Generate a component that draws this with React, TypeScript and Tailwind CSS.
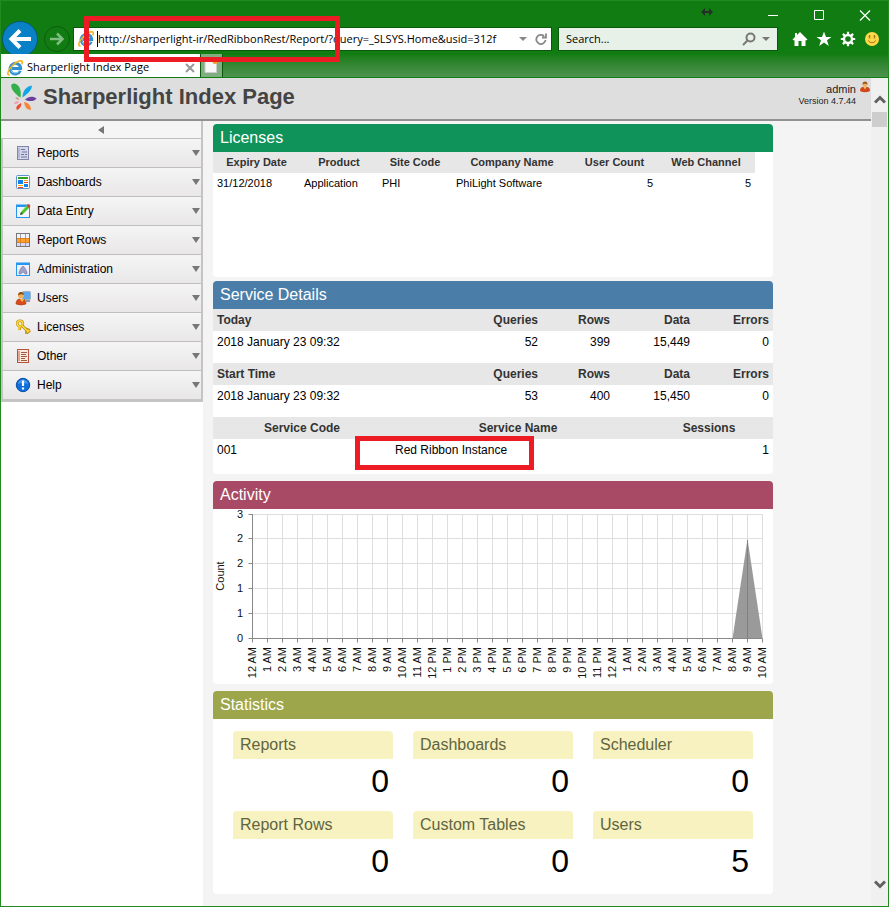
import type { ReactNode } from 'react';

const menuItems = [
    { label: 'Reports', icon: <ReportsIcon /> },
    { label: 'Dashboards', icon: <DashboardsIcon /> },
    { label: 'Data Entry', icon: <DataEntryIcon /> },
    { label: 'Report Rows', icon: <ReportRowsIcon /> },
    { label: 'Administration', icon: <AdministrationIcon /> },
    { label: 'Users', icon: <UsersIcon /> },
    { label: 'Licenses', icon: <KeysIcon /> },
    { label: 'Other', icon: <OtherIcon /> },
    { label: 'Help', icon: <HelpIcon /> },
];

const usage = [
    { title: 'Today', time: '2018 January 23 09:32', queries: '52', rows: '399', data: '15,449', errors: '0' },
    { title: 'Start Time', time: '2018 January 23 09:32', queries: '53', rows: '400', data: '15,450', errors: '0' },
];

const stats = [
    { label: 'Reports', value: 0 },
    { label: 'Dashboards', value: 0 },
    { label: 'Scheduler', value: 0 },
    { label: 'Report Rows', value: 0 },
    { label: 'Custom Tables', value: 0 },
    { label: 'Users', value: 5 },
];

function IeIcon() {
    return (
        <svg className="h-4 w-4 shrink-0" viewBox="0 0 16 16" fill="none">
            <path d="M13.300 10.700A5.300 5.300 0 1 1 13.700 8.600H5" stroke="#2f8fd0" strokeWidth="3" />
            <path d="M12.800 10.400A5.300 5.300 0 0 1 4 11" stroke="#8fd0f5" strokeWidth="1" />
            <path d="M2.600 14.800C-.5 15.600.6 10.600 4.800 6.200C8.800 2 13.800-.3 15 1.300C15.500 2 15.200 3.200 14.600 4.300" stroke="#f2b51c" strokeWidth="1.600" />
        </svg>
    );
}

function ReportsIcon() {
    return (
        <svg className="h-4 w-4" viewBox="0 0 16 16">
            <rect x="2.500" y="1.500" width="11" height="13" fill="#d4d6ea" stroke="#8286a8" />
            <path d="M4 3v10" stroke="#aaaecb" strokeWidth="1.500" />
            <path d="M6 4.500h4M7 7h5M6 9.500h3M10 9.500h2M6 12h6" stroke="#70749c" />
        </svg>
    );
}

function DashboardsIcon() {
    return (
        <svg className="h-4 w-4" viewBox="0 0 16 16">
            <rect x="1.500" y="1.500" width="13" height="13" rx="1" fill="#fff" stroke="#5f90d0" />
            <path d="M3 4h10" stroke="#2fa51e" strokeWidth="2" />
            <path d="M3 6h5v4H3zM9 10h4v3H9z" fill="#1284e8" />
            <path d="M9 6.500h4M3 11.500h5" stroke="#f0a11e" />
            <path d="M9 8.500h4M3 13.500h5" stroke="#df4a24" />
        </svg>
    );
}

function DataEntryIcon() {
    return (
        <svg className="h-4 w-4" viewBox="0 0 16 16">
            <rect x="1.500" y="2" width="13" height="12.500" fill="#f3f4ff" stroke="#2496ee" />
            <path d="M1 3h13" stroke="#2496ee" strokeWidth="2" />
            <path d="M5 12L6 9L12 2.500L14.500 4.500L8 11Z" fill="#48c52d" />
            <path d="M6 9L12 2.500" stroke="#8fea6c" />
            <path d="M11.500 3L13 1L15.500 3L14 5Z" fill="#cf4637" />
            <path d="M5 12l1-3l2 2z" fill="#444" />
        </svg>
    );
}

function ReportRowsIcon() {
    return (
        <svg className="h-4 w-4" viewBox="0 0 16 16">
            <rect x="1.500" y="1.500" width="13" height="13" fill="#f2f2fb" />
            <path d="M2 6h12v5H2z" fill="#ff9f2e" />
            <path d="M2 11h12v3H2z" fill="#d6d6f5" />
            <path d="M5.500 2v4M10.500 2v4M5.500 11v3M10.500 11v3" stroke="#9a9aa8" />
            <path d="M5.500 6v5M10.500 6v5M2 6.500h12M2 10.500h12" stroke="#d07c20" strokeWidth=".8" />
            <rect x="1.500" y="1.500" width="13" height="13" fill="none" stroke="#777" />
        </svg>
    );
}

function AdministrationIcon() {
    return (
        <svg className="h-4 w-4" viewBox="0 0 16 16">
            <rect x="1.500" y="2" width="13" height="12.500" fill="#eef0fc" stroke="#2496ee" />
            <path d="M1 3h14" stroke="#2496ee" strokeWidth="2" />
            <path d="M4 13V11L6 7Q8 3.500 10 7L12 11V13H10L8 11L6 13Z" fill="#9c9fc6" stroke="#7b7ea8" strokeWidth=".6" />
        </svg>
    );
}

function UsersIcon() {
    return (
        <svg className="h-4 w-4" viewBox="0 0 16 16">
            <rect x="7.500" y="1.500" width="8" height="8" rx="1" fill="#5ba9ee" stroke="#9fb2c8" />
            <path d="M11 10h4v2h-4z" fill="#8c98a8" />
            <circle cx="6" cy="5.500" r="3" fill="#f5ae55" />
            <path d="M3 5.500Q3 1.800 6.500 2Q9 2.500 9 5Q6 3.500 3 5.500Z" fill="#8a4a12" />
            <path d="M1 14Q1 9 5 9L8 10.500L9.500 9.500Q11 11 11 14Q6 16 1 14Z" fill="#d94c17" stroke="#a8340e" strokeWidth=".6" />
            <path d="M5 9l2 3l2-2.500z" fill="#f6c34b" />
        </svg>
    );
}

function KeysIcon() {
    return (
        <svg className="h-4 w-4" viewBox="0 0 16 16" fill="none">
            <path d="M5.500 7.500L5 11M10 9l5 2M11 12v3" stroke="#b58a14" strokeWidth="1.500" />
            <circle cx="5" cy="4.500" r="2.800" stroke="#b58a14" strokeWidth="2.600" />
            <circle cx="5" cy="4.500" r="2.800" stroke="#ffd93b" strokeWidth="1.500" />
            <path d="M7 6.500L13.500 13M11.500 14l3.500-3" stroke="#b58a14" strokeWidth="3" />
            <path d="M7 6.500L13.500 13M12 13.500l2.500-2.500" stroke="#ffd93b" strokeWidth="1.600" />
            <path d="M5 8l-1.500 3" stroke="#f2c52d" strokeWidth="2" />
        </svg>
    );
}

function OtherIcon() {
    return (
        <svg className="h-4 w-4" viewBox="0 0 16 16">
            <rect x="2.500" y="1.500" width="11" height="13" fill="#fbe9dc" stroke="#b5533c" />
            <path d="M4 3v10" stroke="#d98e74" strokeWidth="1.500" />
            <path d="M6 4.500h6M6 6.500h5M6 8.500h6M6 10.500h4M6 12.500h6" stroke="#9c5a48" />
        </svg>
    );
}

function HelpIcon() {
    return (
        <svg className="h-4 w-4" viewBox="0 0 16 16">
            <circle cx="8" cy="8" r="6.700" fill="#0f6fdb" stroke="#0a4ca8" />
            <path d="M3 7Q3.500 3 8 2.500Q12.500 3 13 7Q8 5 3 7Z" fill="#5aa9f5" opacity=".7" />
            <path d="M8 3.500v5.500M8 10.500v2" stroke="#fff" strokeWidth="2.200" />
        </svg>
    );
}

function SharperlightLogo() {
    return (
        <svg className="h-7 w-7 shrink-0" viewBox="0 0 28 28">
            <path d="M10.500 14.500C5 11 0 5 1.500 1.500C3.500-1 8 1 9.500 4.500C11 8 11 12 10.500 14.500Z" fill="#34b04a" />
            <path d="M12.500 14.500C12.500 9 15 4 21.500 2.500C23 5 19 10 12.500 14.500Z" fill="#10a6e6" />
            <path d="M15 16.500C18 13.500 23 12.500 26.500 15.500C24 19 18 18.500 15 16.500Z" fill="#6b3fa0" />
            <path d="M14 19C17 19 21 22 21 26.500C17 28 14.500 23 14 19Z" fill="#f5863a" />
            <path d="M11 20C12 22 10 26 7 27C5 24.500 7.500 21.500 11 20Z" fill="#ec4b32" />
            <path d="M9 18.500C8.500 20.500 6 21.500 4 20.500C4.500 18.800 7 17.800 9 18.500Z" fill="#f59ab5" />
            <path d="M9.500 16.500C7 17 5.500 16 5.500 14.500C7.500 13.500 9 15 9.500 16.500Z" fill="#c5a28c" />
        </svg>
    );
}

function Toolbar() {
    return (
        <div className="flex items-center gap-2 text-white">
            <button type="button" aria-label="Home">
                <svg className="h-4 w-4" viewBox="0 0 16 16" fill="currentColor">
                    <path d="M8 1L15.500 8.500L14 9.500L13.500 9V15H9.500V10H6.500V15H2.500V9L2 9.500L.5 8.500L3 6V2H5V4Z" />
                </svg>
            </button>
            <button type="button" aria-label="Favorites">
                <svg className="h-4 w-4" viewBox="0 0 16 16" fill="currentColor">
                    <path d="M8 .5L10 6H15.500L11 9.300L12.800 15L8 11.600L3.200 15L5 9.300L.5 6H6Z" />
                </svg>
            </button>
            <button type="button" aria-label="Tools">
                <svg className="h-4 w-4" viewBox="0 0 16 16" fill="none" stroke="currentColor">
                    <circle cx="8" cy="8" r="4" strokeWidth="2.400" />
                    <path d="M8 .8v3M8 12.200v3M.8 8h3M12.200 8h3M2.900 2.900L5 5M11 11l2.100 2.100M13.100 2.900L11 5M5 11l-2.100 2.100" strokeWidth="2.200" />
                </svg>
            </button>
            <button type="button" aria-label="Feedback">
                <svg className="h-4 w-4" viewBox="0 0 16 16">
                    <circle cx="8" cy="8" r="7" fill="#ffd84a" />
                    <path d="M5.500 4v3.500M10.500 4v3.500" stroke="#a5791a" strokeWidth="1.500" />
                    <path d="M4 9.500Q8 14 12 9.500" fill="none" stroke="#a5791a" />
                </svg>
            </button>
        </div>
    );
}

function BrowserChrome() {
    return (
        <header className="relative bg-[#117c11] font-['Open_Sans','Noto_Sans',sans-serif] text-[11px]">
            <div className="absolute inset-x-0 bottom-0 h-6 bg-linear-to-b from-[#117c11] to-[#4f9350]" />
            {/* Title bar */}
            <div className="relative flex h-[26px] items-center justify-end pt-1 pr-[17px] text-white">
                <svg className="mr-[54px] mb-2 h-3 w-3" viewBox="0 0 12 12" fill="#26302a">
                    <path d="M0 6L4 2V5H8V2L12 6L8 10V7H4V10Z" />
                </svg>
                <div className="flex gap-[34px]">
                    <button type="button" aria-label="Minimize">
                        <svg className="h-3 w-3" viewBox="0 0 12 12" stroke="currentColor"><path d="M1 5.500h10" /></svg>
                    </button>
                    <button type="button" aria-label="Maximize">
                        <svg className="h-3 w-3" viewBox="0 0 12 12" fill="none" stroke="currentColor"><path d="M1.500.5h9v9h-9z" /></svg>
                    </button>
                    <button type="button" aria-label="Close">
                        <svg className="h-3 w-3" viewBox="0 0 12 12" stroke="currentColor"><path d="M1 .5l10 10M11 .5L1 10.500" strokeWidth="1.200" /></svg>
                    </button>
                </div>
            </div>
            {/* Navigation row */}
            <div className="relative flex h-6 items-center pr-2 pl-px">
                <button type="button" aria-label="Back" className="h-9 w-9 shrink-0 rounded-full border border-[#085a72] bg-[#0a81c6]">
                    <svg viewBox="0 0 34 34" fill="none" stroke="#fff" strokeWidth="4"><path d="M28 17H10M17 8.500L8.500 17L17 25.500" /></svg>
                </button>
                <button type="button" aria-label="Forward" className="ml-[6px] h-[26px] w-[26px] shrink-0 rounded-full border border-[#0c5c0c]">
                    <svg viewBox="0 0 24 24" fill="none" stroke="#7fbd80" strokeWidth="2.500"><path d="M5 12h12M12 6.500l5.500 5.500l-5.500 5.500" /></svg>
                </button>
                <div className="ml-[3px] flex h-6 min-w-0 flex-1 items-center border border-[#0b570b] bg-white px-1">
                    <IeIcon />
                    <input
                        aria-label="Address"
                        className="ml-[3px] h-4 min-w-0 flex-1 border-l border-black text-black outline-none"
                        defaultValue="http://sharperlight-ir/RedRibbonRest/Report/?query=_SLSYS.Home&usid=312f"
                    />
                    <button type="button" aria-label="Show address history" className="ml-[6px]">
                        <svg className="h-2 w-2" viewBox="0 0 8 8" fill="#888"><path d="M0 2h8L4 6z" /></svg>
                    </button>
                    <button type="button" aria-label="Refresh" className="ml-1 p-1 pr-0">
                        <svg className="h-3 w-3" viewBox="0 0 12 12" fill="none" stroke="#888" strokeWidth="1.800">
                            <path d="M10.500 7A4.600 4.600 0 1 1 9 3M11 .5V4.500H7" />
                        </svg>
                    </button>
                </div>
                <div className="ml-[6px] flex h-6 w-[220px] shrink-0 items-center border border-[#0b570b] bg-[#e7f1e7] px-[7px]">
                    <input aria-label="Search" className="min-w-0 flex-1 text-black outline-none placeholder:text-black" placeholder="Search..." />
                    <button type="button" aria-label="Search the web">
                        <svg className="h-[14px] w-[14px]" viewBox="0 0 14 14" fill="none" stroke="#777" strokeWidth="2">
                            <circle cx="8.500" cy="5.500" r="4" />
                            <path d="M5.500 8.500L1 13" />
                        </svg>
                    </button>
                    <button type="button" aria-label="Search options" className="ml-[6px]">
                        <svg className="h-2 w-2" viewBox="0 0 8 8" fill="#777"><path d="M0 2h8L4 6z" /></svg>
                    </button>
                </div>
                <div className="ml-[14px]"><Toolbar /></div>
            </div>
            {/* Tabs */}
            <div className="relative mt-[3px] flex h-6 border-b border-[#117c11]">
                <div className="flex w-[200px] items-center border-r border-[#0b570b] bg-white pt-1 pr-[5px] pl-[6px]">
                    <IeIcon />
                    <span className="ml-1 flex-1 text-black">Sharperlight Index Page</span>
                    <button type="button" aria-label="Close tab">
                        <svg className="h-[10px] w-[10px]" viewBox="0 0 10 10" stroke="#999" strokeWidth="2"><path d="M1 1l8 8M9 1L1 9" /></svg>
                    </button>
                </div>
                <button type="button" aria-label="New tab" className="w-[22px] border-r border-[#0b570b] bg-[#7fae80] pl-[2px]">
                    <svg className="h-4 w-4" viewBox="0 0 16 16">
                        <path d="M2 2.500h8.500l3 3v9H2z" fill="#f7f7f7" stroke="#ccc" />
                        <circle cx="12" cy="3.500" r="2.500" fill="#f59b22" />
                    </svg>
                </button>
            </div>
            {/* Callout over the server part of the address */}
            <div className="pointer-events-none absolute top-[15px] left-[83px] h-[46px] w-[256px] border-[5px] border-[#ed1c24]" />
        </header>
    );
}

function Sidebar() {
    return (
        <nav className="w-[202px] shrink-0 bg-white">
            <div className="border-r-2 border-b-3 border-[#c4c4c4] bg-[#f5f5f5]">
                <button type="button" aria-label="Collapse menu" className="flex h-[17px] w-full items-center justify-center">
                    <svg className="h-2 w-2" viewBox="0 0 8 8" fill="#777"><path d="M7 0v8L1 4z" /></svg>
                </button>
                <ul className="border-l-2 border-[#c4c4c4]">
                    {menuItems.map((item) => (
                        <li key={item.label}>
                            <button type="button" className="flex h-[29px] w-full items-center border-t border-[#bfbfbf] bg-linear-to-b from-[#f5f5f5] to-[#e9e7e8] pr-px pl-3 text-left text-xs text-black">
                                {item.icon}
                                <span className="ml-[6px] flex-1">{item.label}</span>
                                <svg className="h-2 w-2" viewBox="0 0 8 8" fill="#777"><path d="M0 1h8L4 7z" /></svg>
                            </button>
                        </li>
                    ))}
                </ul>
            </div>
        </nav>
    );
}

function Panel({ title, className, children }: { title: string; className: string; children: ReactNode }) {
    return (
        <section className="overflow-hidden rounded bg-white">
            <h2 className={`h-7 px-[7px] text-base leading-7 text-white ${className}`}>{title}</h2>
            {children}
        </section>
    );
}

function LicensesTable() {
    return (
        <div className="h-[125px]">
            <table className="w-[542px] table-fixed text-[11px] leading-[21px] text-black">
                <colgroup>
                    <col className="w-[87px]" />
                    <col className="w-[78px]" />
                    <col className="w-[74px]" />
                    <col className="w-[120px]" />
                    <col className="w-[85px]" />
                    <col className="w-[98px]" />
                </colgroup>
                <thead className="bg-[#e7e7e7] text-[#333]">
                    <tr>
                        <th>Expiry Date</th>
                        <th>Product</th>
                        <th>Site Code</th>
                        <th>Company Name</th>
                        <th>User Count</th>
                        <th>Web Channel</th>
                    </tr>
                </thead>
                <tbody>
                    <tr>
                        <td className="px-1">31/12/2018</td>
                        <td className="px-1">Application</td>
                        <td className="px-1">PHI</td>
                        <td className="px-1">PhiLight Software</td>
                        <td className="px-1 text-right">5</td>
                        <td className="px-1 text-right">5</td>
                    </tr>
                </tbody>
            </table>
        </div>
    );
}

function ServiceDetails() {
    return (
        <div className="flex flex-col gap-[10px] pb-[13px] text-xs leading-[22px] text-black">
            {usage.map((u) => (
                <table key={u.title} className="w-full table-fixed">
                    <colgroup>
                        <col />
                        <col className="w-[72px]" />
                        <col className="w-[72px]" />
                        <col className="w-20" />
                        <col className="w-[79px]" />
                    </colgroup>
                    <thead className="bg-[#e7e7e7] text-[#333]">
                        <tr>
                            <th className="px-1 text-left">{u.title}</th>
                            <th className="px-1 text-right">Queries</th>
                            <th className="px-1 text-right">Rows</th>
                            <th className="px-1 text-right">Data</th>
                            <th className="px-1 text-right">Errors</th>
                        </tr>
                    </thead>
                    <tbody>
                        <tr>
                            <td className="px-1">{u.time}</td>
                            <td className="px-1 text-right">{u.queries}</td>
                            <td className="px-1 text-right">{u.rows}</td>
                            <td className="px-1 text-right">{u.data}</td>
                            <td className="px-1 text-right">{u.errors}</td>
                        </tr>
                    </tbody>
                </table>
            ))}
            <table className="w-full table-fixed">
                <colgroup>
                    <col className="w-[178px]" />
                    <col />
                    <col className="w-32" />
                </colgroup>
                <thead className="bg-[#e7e7e7] text-[#333]">
                    <tr>
                        <th>Service Code</th>
                        <th>Service Name</th>
                        <th>Sessions</th>
                    </tr>
                </thead>
                <tbody>
                    <tr>
                        <td className="px-1">001</td>
                        <td className="relative px-1">
                            Red Ribbon Instance
                            <span className="pointer-events-none absolute -top-[3px] -left-9 h-[34px] w-[179px] border-[5px] border-[#ed1c24]" />
                        </td>
                        <td className="px-1 text-right">1</td>
                    </tr>
                </tbody>
            </table>
        </div>
    );
}

function ActivityChart() {
    const left = 39.5;
    const bottom = 129.5;
    const right = 549.5;
    const levels = [
        { y: 5.5, label: '3' },
        { y: 29.5, label: '2' },
        { y: 54.5, label: '2' },
        { y: 79.5, label: '1' },
        { y: 104.5, label: '1' },
        { y: bottom, label: '0' },
    ];
    const hours = Array.from({ length: 35 }, (_, i) => `${i % 12 || 12} ${i % 24 < 12 ? 'AM' : 'PM'}`);

    return (
        <svg className="block w-full" viewBox="0 0 560 175" fontSize="11" fill="#111">
            {levels.map((l) => (
                <g key={l.y}>
                    <path d={`M${left} ${l.y}H${right}`} stroke="#dedede" />
                    <path d={`M${left - 4} ${l.y}H${left}`} stroke="#888" />
                    <text x="30" y={l.y + 3} textAnchor="end">{l.label}</text>
                </g>
            ))}
            {hours.map((h, i) => {
                const x = left + i * 15;
                return (
                    <g key={i}>
                        <path d={`M${x} 5V${bottom}`} stroke="#dedede" />
                        <path d={`M${x} ${bottom}v4`} stroke="#888" />
                        <text transform={`translate(${x + 3} 138) rotate(-90)`} textAnchor="end">{h}</text>
                    </g>
                );
            })}
            <path d={`M519.5 ${bottom}L534.5 30L549.5 ${bottom}Z`} fill="#8f8f8f" fillOpacity=".9" />
            <path d={`M534.5 31V${bottom}`} stroke="#808080" />
            <path d={`M${left} 5V${bottom}H${right}`} fill="none" stroke="#888" />
            <text transform="translate(11 67) rotate(-90)" textAnchor="middle">Count</text>
        </svg>
    );
}

function Statistics() {
    return (
        <div className="grid grid-cols-3 gap-x-5 px-5 pt-3 pb-[3px]">
            {stats.map((s) => (
                <div key={s.label} className="h-20">
                    <h3 className="h-7 rounded-t bg-[#f8f2c0] px-[7px] text-base leading-7 text-[#5f6540]">{s.label}</h3>
                    <p className="px-1 text-right text-[32px] leading-[44px] text-black">{s.value}</p>
                </div>
            ))}
        </div>
    );
}

function PageHeader() {
    return (
        <div className="flex h-[43px] items-start border-b-2 border-[#919191] bg-[#dedede] pl-[9px] text-[#444]">
            <div className="flex flex-1 items-center pt-[3px]">
                <SharperlightLogo />
                <h1 className="ml-[5px] text-[22px] leading-8 font-bold">Sharperlight Index Page</h1>
            </div>
            <div className="pt-[5px] text-right">
                <p className="text-[11px] leading-3 text-[#222]">admin</p>
                <p className="text-[9px] leading-3 text-[#222]">Version 4.7.44</p>
            </div>
            <svg className="mt-[3px] ml-[3px] h-3 w-3" viewBox="0 0 12 12">
                <path d="M1 10Q1 6 4 6H8Q11 6 11 10Q6 12.500 1 10Z" fill="#d0471c" />
                <path d="M4.500 6L6 8.500L7.500 6Z" fill="#f7c56a" />
                <circle cx="6" cy="3.500" r="2.500" fill="#f2b064" />
                <path d="M3.500 3.500Q3.500.5 6 .5T8.500 3.500Q6 1.800 3.500 3.500Z" fill="#9a5a1c" />
            </svg>
        </div>
    );
}

function ScrollBar() {
    return (
        <div className="flex w-[17px] shrink-0 flex-col items-center bg-[#f0f0f0] pt-4 pb-4">
            <button type="button" aria-label="Scroll up">
                <svg className="block h-3 w-3" viewBox="0 0 12 12" fill="none" stroke="#606060" strokeWidth="3"><path d="M1 8.500L6 3.500L11 8.500" /></svg>
            </button>
            <div className="mt-[6px] h-[15px] w-[15px] bg-[#cdcdcd]" />
            <button type="button" aria-label="Scroll down" className="mt-auto">
                <svg className="block h-3 w-3" viewBox="0 0 12 12" fill="none" stroke="#606060" strokeWidth="3"><path d="M1 3.500L6 8.500L11 3.500" /></svg>
            </button>
        </div>
    );
}

export default function App() {
    return (
        <div className="flex min-h-screen flex-col border border-[#218a21] bg-white font-['Liberation_Sans',Arial,sans-serif]">
            <BrowserChrome />
            <div className="flex flex-1">
                <div className="flex min-w-0 flex-1 flex-col">
                    <PageHeader />
                    <div className="flex flex-1">
                        <Sidebar />
                        <main className="min-w-0 flex-1 bg-[#f4f4f4] px-[10px] pt-[3px] pb-3">
                            <div className="flex max-w-[560px] flex-col gap-[7px]">
                                <div className="flex flex-col gap-1">
                                    <Panel title="Licenses" className="bg-[#10935a]"><LicensesTable /></Panel>
                                    <Panel title="Service Details" className="bg-[#4a7ea8]"><ServiceDetails /></Panel>
                                </div>
                                <Panel title="Activity" className="bg-[#a84a65]"><ActivityChart /></Panel>
                                <Panel title="Statistics" className="bg-[#9ea64c]"><Statistics /></Panel>
                            </div>
                        </main>
                    </div>
                </div>
                <ScrollBar />
            </div>
        </div>
    );
}
